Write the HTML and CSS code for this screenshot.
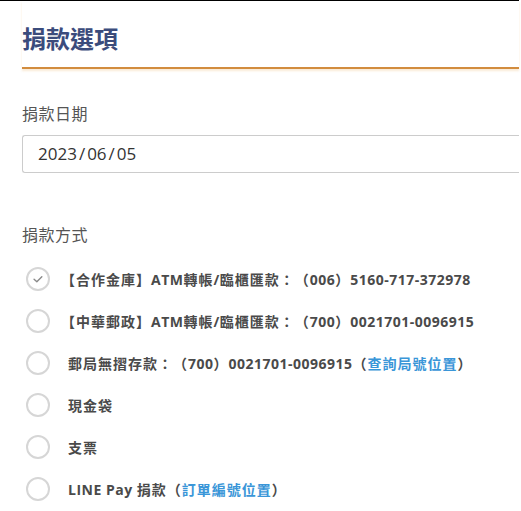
FILE: index.html
```html
<!DOCTYPE html>
<html lang="zh-Hant">
<head>
<meta charset="utf-8">
<link rel="stylesheet" href="styles.css">
</head>
<body>
<div class="page">
  <h1 class="title">捐款選項</h1>

  <div class="field">
    <div class="label">捐款日期</div>
    <div class="date-input">2023<span class="sep">/</span>06<span class="sep">/</span>05</div>
  </div>

  <div class="field methods">
    <div class="label">捐款方式</div>
    <ul class="options">
      <li class="option checked">
        <span class="radio"><svg viewBox="0 0 24 24" width="24" height="24"><path d="M7.3 12.4 L10.6 15.4 L16.6 9.4" fill="none" stroke="#8a8a8a" stroke-width="1.7" stroke-linecap="round" stroke-linejoin="round"/></svg></span>
        <span class="text bracket">【合作金庫】<span class="en">ATM</span>轉帳<span class="en">/</span>臨櫃匯款：（<span class="en">006</span>）<span class="en">5160-717-372978</span></span>
      </li>
      <li class="option">
        <span class="radio"></span>
        <span class="text bracket">【中華郵政】<span class="en">ATM</span>轉帳<span class="en">/</span>臨櫃匯款：（<span class="en">700</span>）<span class="en">0021701-0096915</span></span>
      </li>
      <li class="option">
        <span class="radio"></span>
        <span class="text">郵局無摺存款：（<span class="en">700</span>）<span class="en">0021701-0096915</span>（<a class="link">查詢局號位置</a>）</span>
      </li>
      <li class="option">
        <span class="radio"></span>
        <span class="text">現金袋</span>
      </li>
      <li class="option">
        <span class="radio"></span>
        <span class="text">支票</span>
      </li>
      <li class="option">
        <span class="radio"></span>
        <span class="text"><span class="en">LINE Pay </span>捐款（<a class="link">訂單編號位置</a>）</span>
      </li>
    </ul>
  </div>
</div>
</body>
</html>
```

FILE: styles.css
```css
html, body {
  margin: 0;
  padding: 0;
  background: #fff;
}

body {
  font-family: "Open Sans", "Noto Sans CJK TC", sans-serif;
  overflow: hidden;
  text-spacing-trim: space-all;
}

.page {
  width: 497px;
  padding-left: 22px;
  border-top: 1px solid #000;
}

.title {
  margin: 0;
  padding: 21px 0 13px;
  font-family: "Noto Sans CJK TC", sans-serif;
  font-size: 24px;
  line-height: 32px;
  font-weight: 700;
  color: #3b4c7c;
  border-bottom: 2px solid #d28c3e;
  box-shadow: 0 2px 2px rgba(236, 186, 120, 0.3);
}

.field {
  margin-top: 32px;
}

.label {
  font-family: "Noto Sans CJK TC", sans-serif;
  font-size: 16px;
  line-height: 24px;
  color: #555;
  letter-spacing: 0.5px;
}

.date-input {
  margin-top: 10px;
  height: 36px;
  border: 1px solid #ccc;
  border-right: none;
  border-radius: 3px 0 0 3px;
  padding-left: 15px;
  font-size: 17px;
  line-height: 36px;
  color: #333;
}

.sep {
  margin: 0 2px;
}

.methods {
  margin-top: 49px;
}

.options {
  list-style: none;
  margin: 12px 0 0;
  padding: 0;
}

.option {
  display: flex;
  align-items: center;
  height: 42px;
}

.radio {
  box-sizing: border-box;
  width: 24px;
  height: 24px;
  margin-left: 4px;
  border: 2px solid #d6d6d6;
  border-radius: 50%;
  display: flex;
  align-items: center;
  justify-content: center;
  flex: none;
}

.radio svg {
  width: 22px;
  height: 22px;
}

.text {
  margin-left: 18px;
  font-size: 14px;
  font-weight: 700;
  color: #4a4a4a;
  letter-spacing: 1px;
  white-space: nowrap;
}

.text.bracket {
  margin-left: 11px;
}

.en {
  font-size: 14px;
  letter-spacing: 0.5px;
}

.link {
  color: #3a96d8;
}
```
